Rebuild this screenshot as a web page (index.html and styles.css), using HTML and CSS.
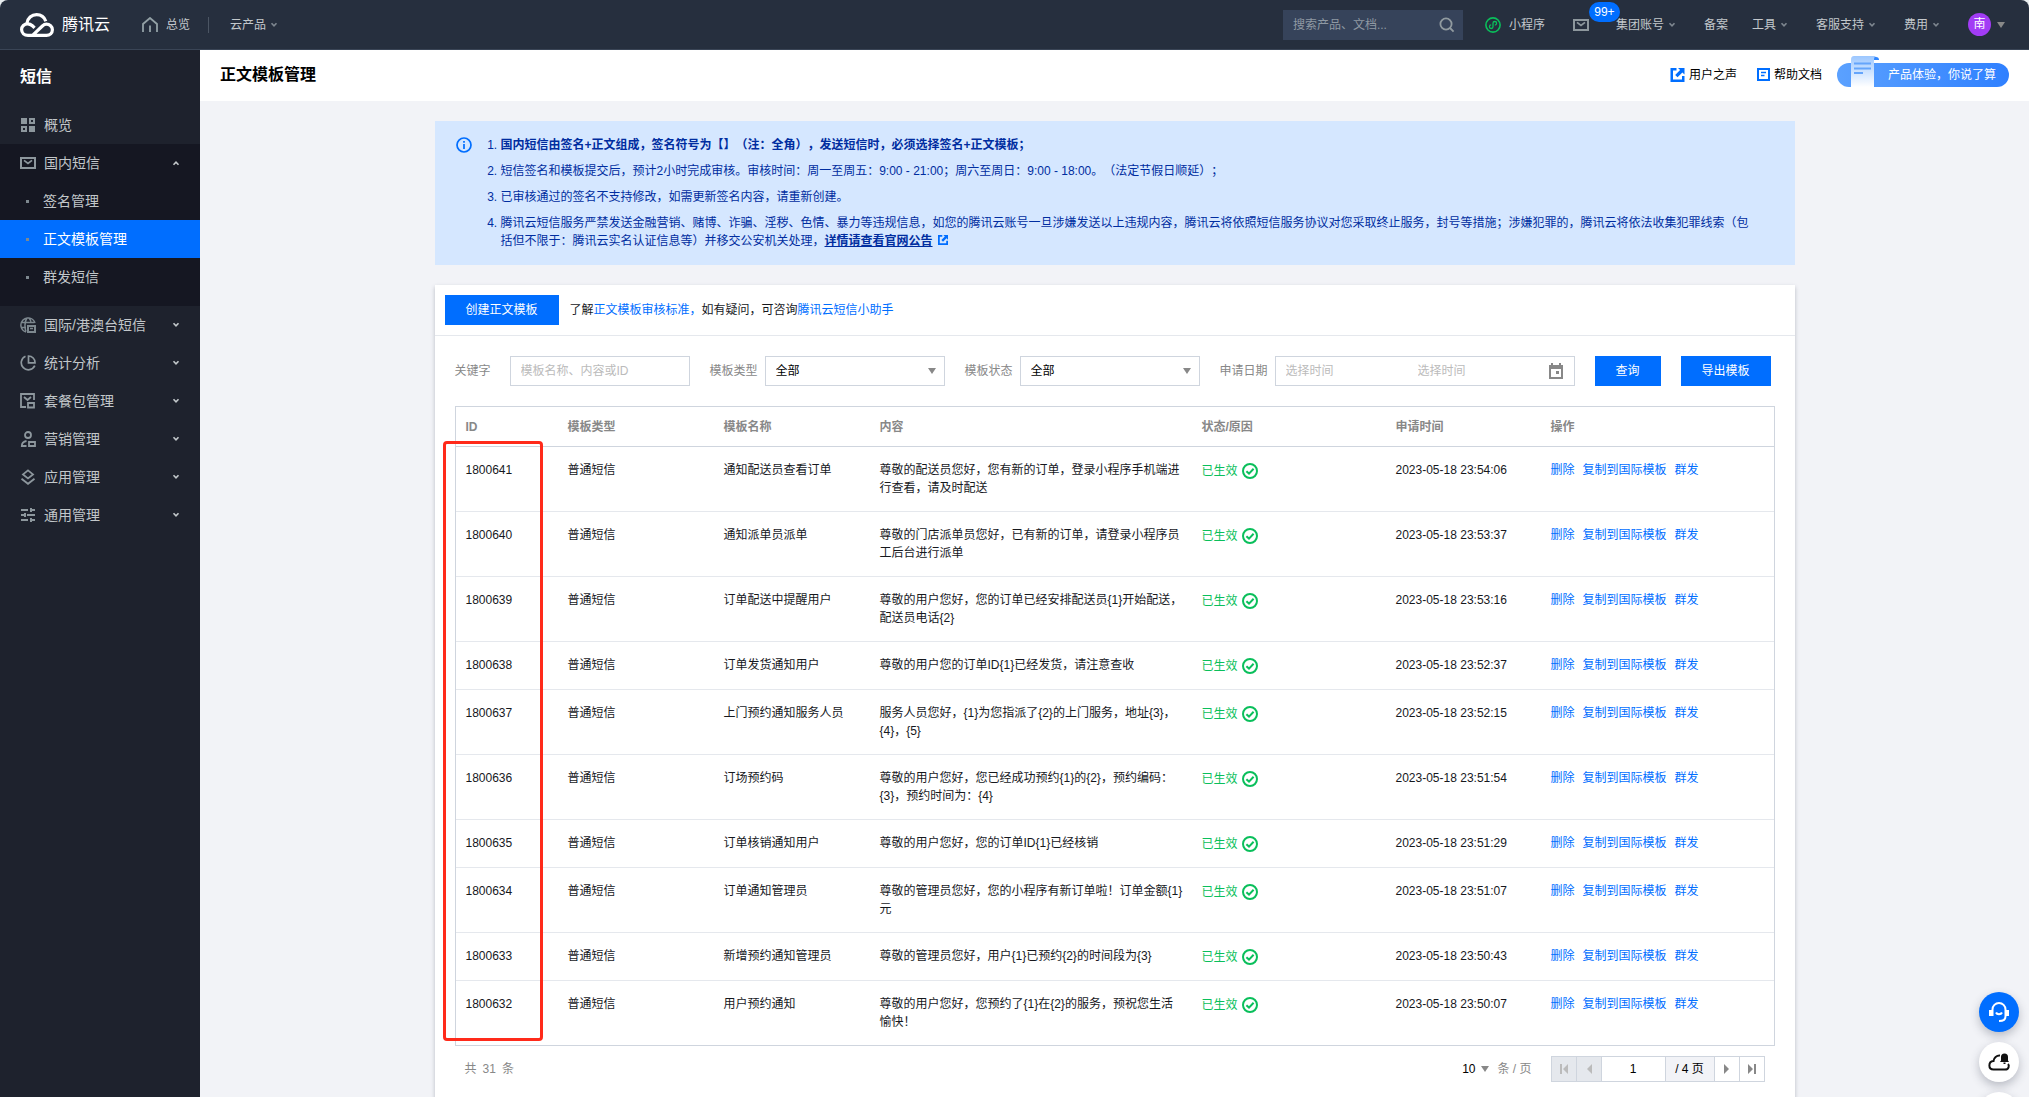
FILE: index.html
```html
<!DOCTYPE html>
<html lang="zh-CN">
<head>
<meta charset="utf-8">
<meta name="viewport" content="width=device-width, initial-scale=1">
<title>正文模板管理 - 短信 - 腾讯云</title>
<link rel="stylesheet" href="styles.css">
</head>
<body>
<svg class="defs" width="0" height="0" aria-hidden="true">
  <symbol id="chev" viewBox="0 0 8 6"><path d="M1.500 1.200 4 3.800l2.500-2.600" fill="none" stroke="currentColor" stroke-width="1.600"/></symbol>
  <symbol id="ok" viewBox="0 0 16 16"><circle cx="8" cy="8" r="7" fill="none" stroke="currentColor" stroke-width="2"/><path d="M4.400 8.200 7 10.600 11.600 5.800" fill="none" stroke="currentColor" stroke-width="2"/></symbol>
  <symbol id="mail" viewBox="0 0 16 12"><path d="M1 1h14v10H1z" fill="none" stroke="currentColor" stroke-width="2"/><path d="M4 3.400 8 6.400l4-3" fill="none" stroke="currentColor" stroke-width="1.800"/></symbol>
  <symbol id="jump" viewBox="0 0 14 14"><path d="M6 0H0v14h14V8h-2.500v3.500h-9v-9H6zM7.500 0H14v6.500l-2.100-2.100-4.900 4.900L4.700 7l4.900-4.900z" fill="currentColor"/></symbol>
</svg>

<header class="topbar">
  <a class="brand" href="#">
    <svg width="34" height="24" viewBox="0 0 34 24" fill="none" stroke="#fff" stroke-width="3.200" stroke-linejoin="round"><path d="M12.500 22.400 22.400 13c1.300-1.200 2.600-1.800 4-1.800 3.200 0 6 2.400 6 5.600s-2.600 5.600-6 5.600H8c-3.700 0-6.400-2.500-6.400-5.800 0-3.200 2.700-5.800 6-5.800 2 0 3.500.8 4.800 2l2.200 2.100"/><path d="M7 10.200C7.600 5.200 11.600 1.600 16.600 1.600c4.400 0 7.800 2.600 9.200 6.600"/></svg>
    <span>腾讯云</span>
  </a>
  <a class="home" href="#"><svg width="16" height="16" viewBox="0 0 16 16" fill="none" stroke="#93a1a6" stroke-width="1.800"><path d="M1 15V7l7-6 7 6v8M8 8.500V15"/></svg><span>总览</span></a>
  <a class="products" href="#">云产品<svg class="chev" width="8" height="6"><use href="#chev"/></svg></a>
  <label class="search"><input type="text" placeholder="搜索产品、文档..." aria-label="搜索产品、文档"><svg width="16" height="16" viewBox="0 0 16 16" fill="none" stroke="#919ba0" stroke-width="1.800"><circle cx="7" cy="7" r="5.600"/><path d="m11 11 3.600 3.600"/></svg></label>
  <a class="mini" href="#"><svg width="16" height="16" viewBox="0 0 16 16" fill="none" stroke="#0abf5b" stroke-width="1.600"><circle cx="8" cy="8" r="7.100"/><path stroke-width="1.300" d="M6.200 7.900a1.800 1.800 0 1 0 1.800 1.800V6.300a1.800 1.800 0 1 1 1.800 1.800"/></svg>小程序</a>
  <a class="inbox" href="#" aria-label="消息"><svg width="16" height="12"><use href="#mail"/></svg><span class="badge">99+</span></a>
  <a class="account" href="#">集团账号<svg class="chev" width="8" height="6"><use href="#chev"/></svg></a>
  <a class="beian" href="#">备案</a>
  <a class="tools" href="#">工具<svg class="chev" width="8" height="6"><use href="#chev"/></svg></a>
  <a class="support" href="#">客服支持<svg class="chev" width="8" height="6"><use href="#chev"/></svg></a>
  <a class="cost" href="#">费用<svg class="chev" width="8" height="6"><use href="#chev"/></svg></a>
  <a class="user" href="#"><span class="avatar">南</span><i class="tri"></i></a>
</header>

<div class="body">
  <nav class="side">
    <h2>短信</h2>
    <a class="item" href="#"><svg width="16" height="16" viewBox="0 0 16 16" fill="#8d979d" fill-rule="evenodd"><path d="M1 1h6v6H1zM9 1h6v6H9zm2 2v2h2V3zM1 9h6v6H1zm2 2v2h2v-2zM9 9h6v6H9z"/></svg><span>概览</span></a>
    <div class="group">
      <a class="item" href="#"><svg width="16" height="12"><use href="#mail"/></svg><span>国内短信</span><svg class="arrow up" width="8" height="6"><use href="#chev"/></svg></a>
      <a class="sub" href="#">签名管理</a>
      <a class="sub active" href="#">正文模板管理</a>
      <a class="sub" href="#">群发短信</a>
    </div>
    <a class="item" href="#"><svg width="16" height="16" viewBox="0 0 16 16" fill="none" stroke="#7d888f" stroke-width="1.500"><path d="M6 15A7.200 7.200 0 1 1 15 6M6 14.500C4.500 11 4.500 4.500 7 1h2c1.400 1.500 2 3 2 5M1 5.500h13M1 10.500h5"/><path d="M8 9h7v6H8z" stroke-width="2"/><path d="M10 11.500h3"/></svg><span>国际/港澳台短信</span><svg class="arrow" width="8" height="6"><use href="#chev"/></svg></a>
    <a class="item" href="#"><svg width="16" height="16" viewBox="0 0 16 16" fill="none" stroke="#8d979d" stroke-width="1.700"><path d="M5.500 1.200a7.100 7.100 0 1 0 9.300 9.500M8.500 1v6.800H15A6.500 6.500 0 0 0 8.500 1z"/></svg><span>统计分析</span><svg class="arrow" width="8" height="6"><use href="#chev"/></svg></a>
    <a class="item" href="#"><svg width="16" height="16" viewBox="0 0 16 16" fill="none" stroke="#8d979d" stroke-width="1.800"><path d="M6 14H1V1h13v6M4 4l3.500 3L11 4M8 10h6v4.500H8z"/></svg><span>套餐包管理</span><svg class="arrow" width="8" height="6"><use href="#chev"/></svg></a>
    <a class="item" href="#"><svg width="16" height="16" viewBox="0 0 16 16" fill="none" stroke="#8d979d" stroke-width="1.800"><circle cx="8" cy="4" r="3"/><path d="M6.500 15H1.800c0-3 1.500-4.500 4.700-5M9 11h6v4H9z"/></svg><span>营销管理</span><svg class="arrow" width="8" height="6"><use href="#chev"/></svg></a>
    <a class="item" href="#"><svg width="16" height="16" viewBox="0 0 16 16" fill="none" stroke="#8d979d" stroke-width="1.800"><path d="m8 1.400 5 4-5 4-5-4zM1.500 9.800 8 14.800l6.500-5"/></svg><span>应用管理</span><svg class="arrow" width="8" height="6"><use href="#chev"/></svg></a>
    <a class="item" href="#"><svg width="16" height="16" viewBox="0 0 16 16" fill="none" stroke="#8d979d" stroke-width="2"><path d="M1 3h7M10 3h5M11 1v4M1 8h4M7 8h8M5 6v4M1 13h7M10 13h5M11 11v4"/></svg><span>通用管理</span><svg class="arrow" width="8" height="6"><use href="#chev"/></svg></a>
  </nav>

  <main class="main">
    <div class="pagehead">
      <h1>正文模板管理</h1>
      <a class="voice" href="#"><svg width="15" height="14"><use href="#jump"/></svg>用户之声</a>
      <a class="docs" href="#"><svg width="13" height="13" viewBox="0 0 13 13" fill="none" stroke="#006eff"><path d="M1 1h11v11H1z" stroke-width="2"/><path d="M4 4.500h5M4 7.500h3.500" stroke-width="1.500"/></svg>帮助文档</a>
      <a class="pill" href="#"><svg width="32" height="32" viewBox="0 0 32 32"><defs><linearGradient id="paper" x1="0" y1="0" x2="0" y2="1"><stop offset="0" stop-color="#9cc7ff"/><stop offset="1" stop-color="#fff"/></linearGradient></defs><path d="M24 2h3c2 0 3 1 3 3h-6z" fill="#2f86ff"/><path d="M2 5c0-3 1-4 3-4h23c-2 0-3 1-3 4v27H2z" fill="url(#paper)"/><path d="M5 8.500h17M5 13.500h17M5 18h9" stroke="#65a5fb" stroke-width="2"/></svg><span>产品体验，你说了算</span></a>
    </div>

    <div class="content">
      <section class="notice">
        <svg width="16" height="16" viewBox="0 0 16 16" fill="none" stroke="#006eff" stroke-width="1.700"><circle cx="8" cy="8" r="7"/><path d="M8 7v5M8 4v1.700"/></svg>
        <ol>
          <li><b>国内短信由签名+正文组成，签名符号为【】（注：全角），发送短信时，必须选择签名+正文模板；</b></li>
          <li>短信签名和模板提交后，预计2小时完成审核。审核时间：周一至周五：9:00 - 21:00；周六至周日：9:00 - 18:00。（法定节假日顺延）；</li>
          <li>已审核通过的签名不支持修改，如需更新签名内容，请重新创建。</li>
          <li>腾讯云短信服务严禁发送金融营销、赌博、诈骗、淫秽、色情、暴力等违规信息，如您的腾讯云账号一旦涉嫌发送以上违规内容，腾讯云将依照短信服务协议对您采取终止服务，封号等措施；涉嫌犯罪的，腾讯云将依法收集犯罪线索（包括但不限于：腾讯云实名认证信息等）并移交公安机关处理，<a href="#">详情请查看官网公告</a><svg width="10" height="10" viewBox="0 0 14 14"><use href="#jump"/></svg></li>
        </ol>
      </section>

      <section class="card">
        <div class="bar">
          <button class="btn" type="button">创建正文模板</button>
          <p>了解<a href="#">正文模板审核标准，</a>如有疑问，可咨询<a href="#">腾讯云短信小助手</a></p>
        </div>
        <form class="filters">
          <label class="kw" for="kw">关键字</label>
          <input class="field" id="kw" type="text" placeholder="模板名称、内容或ID">
          <label for="type">模板类型</label>
          <div class="select"><select class="field" id="type"><option>全部</option></select><i class="tri"></i></div>
          <label for="state">模板状态</label>
          <div class="select"><select class="field" id="state"><option>全部</option></select><i class="tri"></i></div>
          <label for="from">申请日期</label>
          <div class="range"><input id="from" type="text" placeholder="选择时间"><input class="to" type="text" placeholder="选择时间" aria-label="结束时间"><svg width="14" height="16" viewBox="0 0 14 16" fill="#888" fill-rule="evenodd"><path d="M2 0h2v2h6V0h2v2h2v14H0V2h2zM2 6v8h10V6zM7 8h3v3H7z"/></svg></div>
          <button class="btn query" type="button">查询</button>
          <button class="btn export" type="button">导出模板</button>
        </form>

        <div class="tablebox">
          <table>
            <colgroup><col class="c1"><col class="c2"><col class="c2"><col class="c4"><col class="c5"><col class="c6"><col></colgroup>
            <thead><tr><th>ID</th><th>模板类型</th><th>模板名称</th><th>内容</th><th>状态/原因</th><th>申请时间</th><th>操作</th></tr></thead>
            <tbody>
              <tr><td>1800641</td><td>普通短信</td><td>通知配送员查看订单</td><td>尊敬的配送员您好，您有新的订单，登录小程序手机端进行查看，请及时配送</td><td><span class="ok">已生效<svg width="16" height="16"><use href="#ok"/></svg></span></td><td>2023-05-18 23:54:06</td><td class="ops"><a href="#">删除</a><a href="#">复制到国际模板</a><a href="#">群发</a></td></tr>
              <tr><td>1800640</td><td>普通短信</td><td>通知派单员派单</td><td>尊敬的门店派单员您好，已有新的订单，请登录小程序员工后台进行派单</td><td><span class="ok">已生效<svg width="16" height="16"><use href="#ok"/></svg></span></td><td>2023-05-18 23:53:37</td><td class="ops"><a href="#">删除</a><a href="#">复制到国际模板</a><a href="#">群发</a></td></tr>
              <tr><td>1800639</td><td>普通短信</td><td>订单配送中提醒用户</td><td>尊敬的用户您好，您的订单已经安排配送员{1}开始配送，配送员电话{2}</td><td><span class="ok">已生效<svg width="16" height="16"><use href="#ok"/></svg></span></td><td>2023-05-18 23:53:16</td><td class="ops"><a href="#">删除</a><a href="#">复制到国际模板</a><a href="#">群发</a></td></tr>
              <tr><td>1800638</td><td>普通短信</td><td>订单发货通知用户</td><td>尊敬的用户您的订单ID{1}已经发货，请注意查收</td><td><span class="ok">已生效<svg width="16" height="16"><use href="#ok"/></svg></span></td><td>2023-05-18 23:52:37</td><td class="ops"><a href="#">删除</a><a href="#">复制到国际模板</a><a href="#">群发</a></td></tr>
              <tr><td>1800637</td><td>普通短信</td><td>上门预约通知服务人员</td><td>服务人员您好，{1}为您指派了{2}的上门服务，地址{3}，{4}，{5}</td><td><span class="ok">已生效<svg width="16" height="16"><use href="#ok"/></svg></span></td><td>2023-05-18 23:52:15</td><td class="ops"><a href="#">删除</a><a href="#">复制到国际模板</a><a href="#">群发</a></td></tr>
              <tr><td>1800636</td><td>普通短信</td><td>订场预约码</td><td>尊敬的用户您好，您已经成功预约{1}的{2}，预约编码：{3}，预约时间为：{4}</td><td><span class="ok">已生效<svg width="16" height="16"><use href="#ok"/></svg></span></td><td>2023-05-18 23:51:54</td><td class="ops"><a href="#">删除</a><a href="#">复制到国际模板</a><a href="#">群发</a></td></tr>
              <tr><td>1800635</td><td>普通短信</td><td>订单核销通知用户</td><td>尊敬的用户您好，您的订单ID{1}已经核销</td><td><span class="ok">已生效<svg width="16" height="16"><use href="#ok"/></svg></span></td><td>2023-05-18 23:51:29</td><td class="ops"><a href="#">删除</a><a href="#">复制到国际模板</a><a href="#">群发</a></td></tr>
              <tr><td>1800634</td><td>普通短信</td><td>订单通知管理员</td><td>尊敬的管理员您好，您的小程序有新订单啦！订单金额{1}元</td><td><span class="ok">已生效<svg width="16" height="16"><use href="#ok"/></svg></span></td><td>2023-05-18 23:51:07</td><td class="ops"><a href="#">删除</a><a href="#">复制到国际模板</a><a href="#">群发</a></td></tr>
              <tr><td>1800633</td><td>普通短信</td><td>新增预约通知管理员</td><td>尊敬的管理员您好，用户{1}已预约{2}的时间段为{3}</td><td><span class="ok">已生效<svg width="16" height="16"><use href="#ok"/></svg></span></td><td>2023-05-18 23:50:43</td><td class="ops"><a href="#">删除</a><a href="#">复制到国际模板</a><a href="#">群发</a></td></tr>
              <tr><td>1800632</td><td>普通短信</td><td>用户预约通知</td><td>尊敬的用户您好，您预约了{1}在{2}的服务，预祝您生活愉快！</td><td><span class="ok">已生效<svg width="16" height="16"><use href="#ok"/></svg></span></td><td>2023-05-18 23:50:07</td><td class="ops"><a href="#">删除</a><a href="#">复制到国际模板</a><a href="#">群发</a></td></tr>
            </tbody>
          </table>
          <div class="mark"></div>
        </div>

        <div class="pager">
          <p class="total"><span>共</span> <span>31</span> <span>条</span></p>
          <button class="size" type="button">10<i class="tri"></i></button>
          <span class="unit">条 / 页</span>
          <div class="pages">
            <button type="button" disabled aria-label="首页"><svg width="8" height="10" viewBox="0 0 8 10" fill="currentColor"><path d="M0 0h2v10H0zM8 0v10L3 5z"/></svg></button>
            <button type="button" disabled aria-label="上一页"><svg width="6" height="10" viewBox="0 0 6 10" fill="currentColor"><path d="M6 0v10L1 5z"/></svg></button>
            <input type="text" value="1" aria-label="页码">
            <span>/ 4 页</span>
            <button type="button" aria-label="下一页"><svg width="6" height="10" viewBox="0 0 6 10" fill="currentColor"><path d="M0 0v10l5-5z"/></svg></button>
            <button type="button" aria-label="末页"><svg width="8" height="10" viewBox="0 0 8 10" fill="currentColor"><path d="M6 0h2v10H6zM0 0v10l5-5z"/></svg></button>
          </div>
        </div>
      </section>
    </div>
  </main>
</div>

<div class="floats">
  <button class="help" type="button" aria-label="在线客服"><svg width="22" height="22" viewBox="0 0 22 22" fill="none" stroke="#fff" stroke-width="2"><path d="M4.500 15V8.500a6.500 6.500 0 0 1 13 0v7c0 3-2 4.500-6.500 4.500M8 11.500c1 2.200 5 2.200 6 0"/><path d="M1 9h4v6H1zM17 9h4v6h-4z" fill="#fff" stroke="none"/></svg></button>
  <button type="button" aria-label="云助手"><svg width="24" height="24" viewBox="0 0 24 24"><path d="M13 5.500A6 6 0 0 0 6.500 11C1 11.500 1 19.500 6.500 19.500H18c4 0 4.500-4 3-5.500" fill="none" stroke="#111" stroke-width="2"/><path d="M14 10.500V7a3.500 3.500 0 0 1 7 0v3.500l1 1.500h-9zM16.500 12.500h2V14h-2z" fill="#111"/></svg></button>
  <button type="button" aria-label="更多"></button>
</div>
</body>
</html>
```
FILE: styles.css
```css
* { box-sizing: border-box; }
html, body { height: 100%; }
body {
  margin: 0;
  display: flex;
  flex-direction: column;
  overflow: hidden;
  background: #e9eef0;
  color: #16181d;
  font: 12px/18px "Liberation Sans", "Noto Sans CJK SC", sans-serif;
  text-spacing-trim: space-all;
}
a { color: inherit; text-decoration: none; }
h1, h2, p, ol { margin: 0; }
button, input, select { font: inherit; color: inherit; border-radius: 0; }
svg { flex: none; }
.defs { position: absolute; }
.tri { flex: none; border: 4px solid transparent; border-top: 6px solid #888; border-bottom: 0; }

.topbar {
  flex: none;
  display: flex;
  align-items: center;
  height: 50px;
  padding: 0 24px 0 20px;
  border-bottom: 1px solid #3a4556;
  border-radius: 8px 8px 0 0;
  background: #262f3e;
  color: #c3c8cc;
}
.topbar a { display: flex; align-items: center; flex: none; }
.chev { margin-left: 4px; color: #7d868f; }
.topbar .brand { gap: 8px; color: #fff; font-size: 16px; }
.home { gap: 8px; margin-left: 32px; padding-right: 18px; }
.products { padding-left: 21px; border-left: 1px solid #4b5563; line-height: 16px; }
.search { display: flex; align-items: center; width: 180px; height: 30px; margin-left: auto; padding: 0 8px 0 10px; background: #36435a; }
.search input { flex: 1; min-width: 0; padding: 0; border: 0; outline: 0; background: none; }
.search input::placeholder { color: #8f99a3; }
.mini { gap: 8px; margin-left: 22px; }
.inbox { position: relative; margin-left: 28px; color: #8d979d; }
.badge { position: absolute; left: 16px; top: -17px; width: 31px; height: 20px; border-radius: 10px; background: #006eff; color: #fff; line-height: 20px; text-align: center; }
.account { margin-left: 27px; }
.beian { margin-left: 28px; }
.tools { margin-left: 24px; }
.support { margin-left: 28px; }
.cost { margin-left: 28px; }
.user { gap: 6px; margin-left: 28px; }
.avatar { width: 23px; height: 23px; border-radius: 50%; background: #a23cf5; color: #fff; line-height: 23px; text-align: center; }

.body { flex: 1; display: flex; min-height: 0; }
.side { flex: none; width: 200px; background: #1e222d; color: #c2c7ca; font-size: 14px; }
.side h2 { padding: 17px 20px 19px; color: #fff; font-size: 16px; line-height: 20px; }
.item { display: flex; align-items: center; gap: 8px; height: 38px; padding: 0 20px; color: #8d979d; }
.item span { color: #c2c7ca; }
.arrow { margin-left: auto; color: #c2c7ca; }
.up { transform: scaleY(-1); }
.group { padding-bottom: 10px; background: #151722; }
.sub { display: flex; align-items: center; gap: 14px; height: 38px; padding-left: 26px; }
.sub::before { content: ""; width: 3px; height: 3px; background: #7d888f; }
.active { background: #006eff; color: #fff; }

.main { flex: 1; min-width: 0; background: #f2f3f7; overflow: hidden; }
.pagehead { display: flex; align-items: center; height: 51px; padding: 0 20px 2px; background: #fff; color: #000; }
.pagehead h1 { margin-right: auto; font-size: 16px; line-height: 24px; }
.voice, .docs { display: flex; align-items: center; gap: 4px; margin-right: 20px; }
.voice svg { color: #006eff; }
.docs { margin-right: 15px; }
.pill { position: relative; width: 172px; height: 24px; padding-left: 51px; border-radius: 12px; background: linear-gradient(90deg, #5ba1ff, #2f80ff); color: #fff; line-height: 24px; }
.pill svg { position: absolute; left: 12px; bottom: 0; }

.content { max-width: 1360px; margin: 20px auto 0; }
.notice { display: flex; gap: 20px; padding: 15px 40px 7px 21px; margin-bottom: 20px; background: #d5e7ff; color: #002da0; }
.notice > svg { margin-top: 1px; }
.notice ol { padding-left: 9px; }
.notice li { margin-bottom: 8px; }
.notice li a { font-weight: bold; text-decoration: underline; }
.notice li svg { margin-left: 5px; color: #006eff; }

.card { background: #fff; box-shadow: 0 2px 4px rgba(54, 58, 80, .3); }
.bar { display: flex; align-items: center; gap: 11px; padding: 10px; border-bottom: 1px solid #e5e8ed; }
.bar p a, .ops a { color: #006eff; }
.btn { height: 30px; padding: 0 20px; border: 0; background: #006eff; color: #fff; white-space: nowrap; }
.bar .btn { width: 114px; }
.filters { display: flex; align-items: center; padding: 20px; color: #888; }
.filters label { flex: none; margin: 0 7px 0 20px; }
.filters .kw { margin: 0 19px 0 0; }
.field { width: 180px; height: 30px; padding: 0 10px; border: 1px solid #cfd5de; background: #fff; }
.select { position: relative; }
.select .field { appearance: none; color: #000; }
.select .tri { position: absolute; right: 9px; top: 12px; }
input::placeholder { color: #bbb; }
.range { display: flex; align-items: center; width: 300px; height: 30px; padding: 0 11px 0 10px; border: 1px solid #cfd5de; }
.range input { width: 132px; padding: 0; border: 0; }
.range .to { width: 100px; }
.range svg { margin-left: auto; }
.query { width: 66px; margin-left: 20px; }
.export { width: 90px; margin-left: 20px; }

.tablebox { position: relative; margin: 0 20px; border: 1px solid #cfd5de; border-bottom: 0; }
table { width: 100%; table-layout: fixed; border-collapse: separate; border-spacing: 0; }
.c1 { width: 102px; }
.c2 { width: 156px; }
.c4 { width: 322px; }
.c5 { width: 194px; }
.c6 { width: 155px; }
th { height: 40px; padding: 0 10px; border-bottom: 1px solid #cfd5de; color: #888; text-align: left; font-weight: bold; }
td { padding: 14px 8px 14px 10px; border-bottom: 1px solid #e5e8ed; vertical-align: top; }
tr:last-child td { border-bottom-color: #cfd5de; }
.ok { display: flex; align-items: center; gap: 4px; height: 19px; color: #0abf5b; }
.ops a { margin-right: 8px; }
.mark { position: absolute; left: -13px; top: 34px; bottom: 5px; width: 100px; border: 3px solid #ff2a1a; border-radius: 4px; }

.pager { display: flex; align-items: center; padding: 10px 30px 40px; color: #888; }
.total { display: flex; gap: 6px; margin-right: auto; }
.size { display: flex; align-items: center; gap: 6px; padding: 0; border: 0; background: none; color: #000; }
.unit { margin: 0 19px 0 8px; }
.pages { display: flex; height: 26px; border: 1px solid #cfd5de; color: #000; }
.pages > * { width: 25px; border: 0; border-right: 1px solid #cfd5de; text-align: center; line-height: 24px; }
.pages > :last-child { border-right: 0; width: 24px; }
.pages button { display: flex; align-items: center; justify-content: center; padding: 0; background: #fff; color: #888; }
.pages button:disabled { background: #e5e8ed; color: #bbb; }
.pages input { width: 64px; padding: 0; }
.pages span { width: 49px; background: #f2f3f7; }

.floats { position: fixed; right: 10px; bottom: -35px; display: flex; flex-direction: column; gap: 10px; }
.floats button { display: flex; align-items: center; justify-content: center; width: 40px; height: 40px; padding: 0; border: 0; border-radius: 50%; background: #fff; box-shadow: 0 4px 10px rgba(54, 58, 80, .3); }
.floats .help { background: #006eff; }
```
